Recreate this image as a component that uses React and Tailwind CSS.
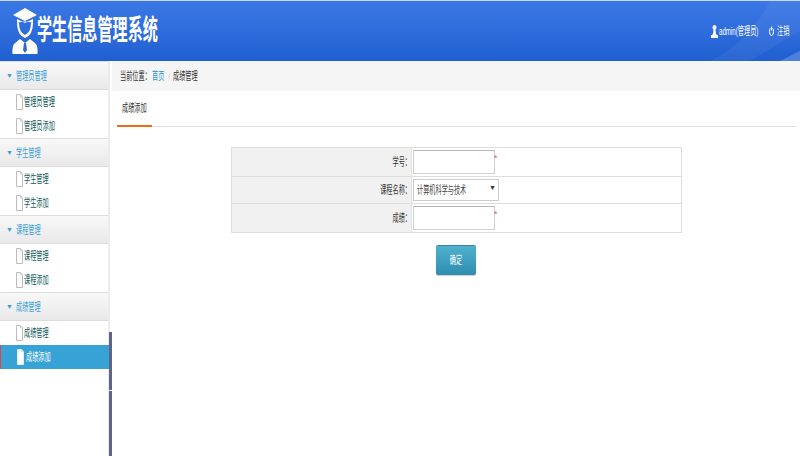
const groups = [
  { title: "管理员管理", items: ["管理员管理", "管理员添加"] },
  { title: "学生管理", items: ["学生管理", "学生添加"] },
  { title: "课程管理", items: ["课程管理", "课程添加"] },
  { title: "成绩管理", items: ["成绩管理", "成绩添加"], active: "成绩添加" },
];

function Squeezed({ children, className = "" }) {
  return <span className={"inline-block origin-left scale-x-[0.56] whitespace-nowrap text-[11px] " + className}>{children}</span>;
}

function FileIcon({ active }) {
  return (
    <svg width="7" height="16" viewBox="0 0 7 16" className="shrink-0">
      <path d="M0.5 0.5H4.5L6.5 3V15.5H0.5Z" fill="#ffffff" stroke={active ? "#e6eef3" : "#bdbdbd"} />
      <path d="M4.5 0.5V3H6.5" fill="none" stroke={active ? "#d5e5ee" : "#d0d0d0"} />
    </svg>
  );
}

function Logo() {
  return (
    <svg width="26" height="46" viewBox="0 0 26 46" className="shrink-0">
      <path d="M13 0L25 7L13 13L1 7Z" fill="#fff" />
      <path d="M5 11L13 15L21 11V15Q13 12 5 15Z" fill="#fff" />
      <path d="M5 15Q5 27 13 30Q21 27 21 15L19 15Q19 24 13 27Q7 24 7 15Z" fill="#fff" />
      <path d="M8 31L13 35L18 31L24 36Q26 39 25.5 46H0.5Q0 39 2 36Z" fill="#fff" />
      <path d="M12 35H14L15 42L13 45L11 42Z" fill="#2f68d4" />
    </svg>
  );
}

function Header() {
  return (
    <header className="relative flex h-[61px] items-center justify-between overflow-hidden border-t border-[#c9d7ee] bg-gradient-to-b from-[#3a78e4] via-[#2f6cdc] to-[#1f5fd0] pl-3 pr-[10px]">
      {/* diagonal light sweep in the right corner */}
      <svg width="100" height="60" viewBox="0 0 100 60" className="absolute right-0 top-0">
        <path d="M70 0H100V30Q70 48 50 60H10Q50 40 70 0Z" fill="#ffffff" fillOpacity="0.05" />
        <path d="M100 50V60H80Z" fill="#ffffff" fillOpacity="0.2" />
      </svg>
      <div className="relative flex items-center">
        <Logo />
        <span className="ml-[-1px] inline-block w-[121px] origin-left scale-x-[0.54] whitespace-nowrap text-[28px] font-bold text-white">
          学生信息管理系统
        </span>
      </div>
      <div className="relative flex items-center text-white">
        <svg width="7" height="13" viewBox="0 0 7 13" fill="#fff">
          <ellipse cx="3.5" cy="2.5" rx="2" ry="2.5" />
          <path d="M2.5 5H4.5L5 9L7 10.5V13H0V10.5L2 9Z" />
        </svg>
        <Squeezed className="ml-px w-[49px]">admin(管理员)</Squeezed>
        <svg width="5" height="10" viewBox="0 0 5 10" fill="none" stroke="#fff" strokeWidth="1" className="ml-px">
          <path d="M1.2 2.2Q0.5 3.5 0.5 5.5Q0.5 9.5 2.5 9.5Q4.5 9.5 4.5 5.5Q4.5 3.5 3.8 2.2" />
          <path d="M2.5 0.5V4.5" />
        </svg>
        <Squeezed className="ml-[3px] w-[13px]">注销</Squeezed>
      </div>
    </header>
  );
}

function Sidebar() {
  return (
    <aside className="relative w-[110px] shrink-0 border-r-2 border-[#ececec] bg-white">
      {groups.map((g) => (
        <div key={g.title}>
          <div className="flex h-[29px] items-center border-y border-b-[#dcdcdc] border-t-[#dddddd] bg-gradient-to-b from-[#f8f8f8] to-[#e9e9e9] pl-[6px] pt-[2px] text-[#3b9fd8]">
            <span className="mr-[3px] text-[7px]">▼</span>
            <Squeezed>{g.title}</Squeezed>
          </div>
          {g.items.map((item) => {
            const on = item === g.active;
            return (
              <div
                key={item}
                className={
                  "flex h-[24px] items-center pl-[16px] " +
                  (on ? "mr-[-2px] border-l border-[#e8433f] bg-[#36a2d6] text-white" : "text-[#0f5a5a]")
                }
              >
                <FileIcon active={on} />
                <Squeezed className={on ? "ml-[2px]" : "ml-[1px]"}>{item}</Squeezed>
              </div>
            );
          })}
        </div>
      ))}
      <div className="absolute right-[-4px] top-[271px] flex h-[124px] w-[3px] flex-col gap-px">
        <div className="h-[58px] bg-[#5f6488]" />
        <div className="flex-1 bg-[#5f6488]" />
      </div>
    </aside>
  );
}

function FormRow({ label, children, height }) {
  return (
    <div className={"flex border-b border-[#dddddd] " + height}>
      <div className="flex w-[180px] items-center justify-end border-r border-[#e4e4e4] bg-[#f1f1f1] text-[#333333]">
        <span className="inline-block origin-right scale-x-[0.56] whitespace-nowrap text-[11px]">{label}</span>
      </div>
      <div className="flex flex-1 items-center bg-white pl-[1px]">{children}</div>
    </div>
  );
}

function TextInput() {
  return (
    <div className="flex items-start">
      <div className="h-[24px] w-[82px] border border-[#d0d0d0] border-t-[#b8b8b8] bg-white" />
      <span className="ml-[-1px] text-[9px] leading-[16px] text-[#f0506a]">*</span>
    </div>
  );
}

export default function App() {
  return (
    <div className="h-[456px] w-[800px] overflow-hidden bg-white font-['Liberation_Sans','Noto_Sans_CJK_SC',sans-serif]">
      <Header />
      <div className="flex h-[395px]">
        <Sidebar />
        <main className="ml-[2px] flex-1">
          <div className="flex h-[30px] items-center bg-[#f5f5f5] pl-[8px] text-[#333333]">
            <Squeezed className="w-[32px]">当前位置：</Squeezed>
            <span className="inline-block w-[16px] origin-left scale-x-[0.56] whitespace-nowrap text-[11px] text-[#1f8fd0]">首页</span>
            <span className="mr-[3px] text-[8px] text-[#cccccc]">/</span>
            <Squeezed>成绩管理</Squeezed>
          </div>
          <div className="ml-[5px] mr-[4px] mt-px flex h-[35px] border-b border-[#dddddd]">
            <div className="mb-[-1px] flex w-[35px] items-center justify-start border-b-2 border-[#f06a1a] pl-[5px] text-[#333333]">
              <Squeezed>成绩添加</Squeezed>
            </div>
          </div>
          <div className="ml-[119px] mt-[20px] w-[451px] border-l border-r border-t border-[#dddddd]">
            <FormRow label="学号：" height="h-[29px]">
              <TextInput />
            </FormRow>
            <FormRow label="课程名称：" height="h-[27px]">
              <div className="relative flex h-[22px] w-[86px] items-center border border-[#cccccc] bg-white pl-[3px] text-[#444444]">
                <Squeezed>计算机科学与技术</Squeezed>
                <span className="absolute right-[2px] top-[3px] text-[7px] text-[#333333]">▼</span>
              </div>
            </FormRow>
            <FormRow label="成绩：" height="h-[29px]">
              <TextInput />
            </FormRow>
          </div>
          <div className="ml-[324px] mt-[12px] flex h-[30px] w-[40px] items-center justify-center rounded-[2px] border-t border-[#3187a6] bg-gradient-to-b from-[#4fb0ce] to-[#2f8eb0] text-white shadow-[0_1px_1px_rgba(0,0,0,0.2)]">
            <span className="inline-block scale-x-[0.56] whitespace-nowrap text-[11px]">确定</span>
          </div>
        </main>
      </div>
    </div>
  );
}
